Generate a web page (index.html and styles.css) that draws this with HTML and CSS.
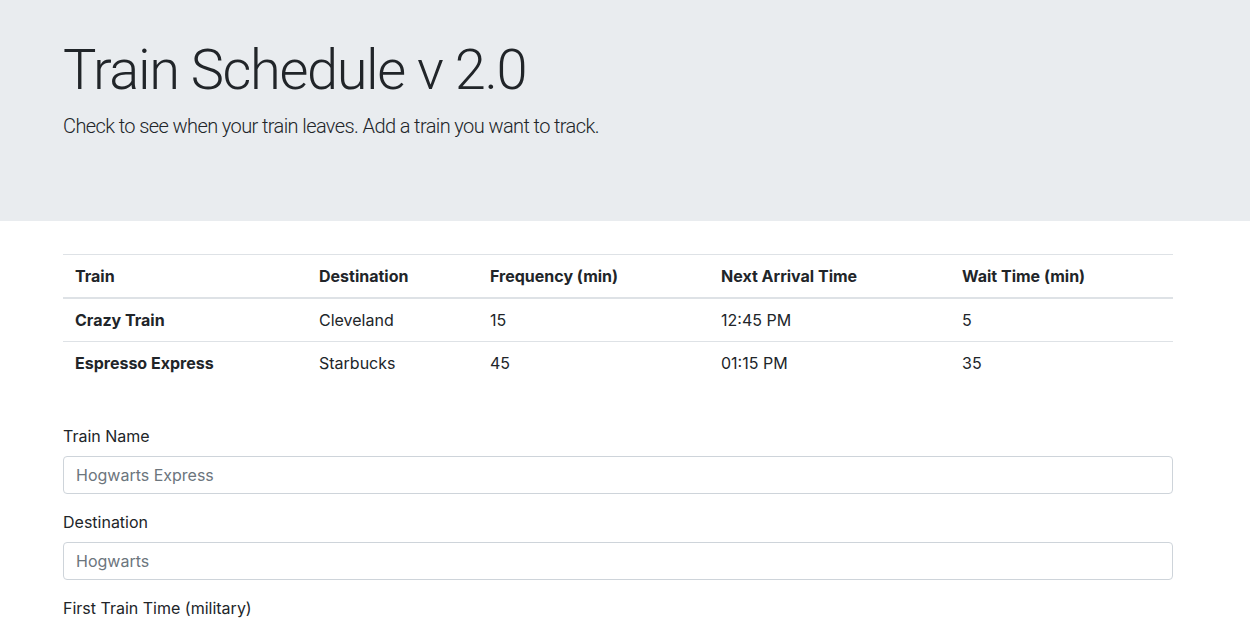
FILE: index.html
```html
<!DOCTYPE html>
<html lang="en">
<head>
<meta charset="utf-8">
<title>Train Schedule</title>
<link rel="stylesheet" href="styles.css">
</head>
<body>
<header class="jumbotron">
  <div class="container">
    <h1 class="display">Train Schedule v 2.0</h1>
    <p class="lead">Check to see when your train leaves. Add a train you want to track.</p>
  </div>
</header>
<main class="container">
  <table class="table">
    <thead>
      <tr>
        <th class="c1">Train</th>
        <th class="c2">Destination</th>
        <th class="c3">Frequency (min)</th>
        <th class="c4">Next Arrival Time</th>
        <th class="c5">Wait Time (min)</th>
      </tr>
    </thead>
    <tbody>
      <tr>
        <th>Crazy Train</th>
        <td>Cleveland</td>
        <td>15</td>
        <td>12:45 PM</td>
        <td>5</td>
      </tr>
      <tr>
        <th>Espresso Express</th>
        <td>Starbucks</td>
        <td>45</td>
        <td>01:15 PM</td>
        <td>35</td>
      </tr>
    </tbody>
  </table>
  <form class="form">
    <div class="form-group">
      <label for="name">Train Name</label>
      <input id="name" class="form-control" type="text" placeholder="Hogwarts Express">
    </div>
    <div class="form-group">
      <label for="dest">Destination</label>
      <input id="dest" class="form-control" type="text" placeholder="Hogwarts">
    </div>
    <div class="form-group">
      <label for="first">First Train Time (military)</label>
      <input id="first" class="form-control" type="text" placeholder="13:00">
    </div>
  </form>
</main>
</body>
</html>
```
FILE: styles.css
```css
* { box-sizing: border-box; }
html, body { margin: 0; padding: 0; }
body {
  font-family: "Inter", "Roboto", "Liberation Sans", sans-serif;
  font-size: 16px;
  line-height: 1.5;
  color: #212529;
  background: #fff;
}
.container {
  width: 1110px;
  margin-left: 63px;
}
.jumbotron {
  background: #e9ecef;
  height: 221px;
  padding-top: 37px;
  margin-bottom: 33px;
}
.display {
  font-family: "Roboto", "Liberation Sans", sans-serif;
  font-size: 56px;
  font-weight: 300;
  line-height: 67px;
  letter-spacing: -1.4px;
  margin: 0 0 7px 0;
}
.lead {
  font-family: "Roboto", "Liberation Sans", sans-serif;
  font-size: 20px;
  font-weight: 300;
  line-height: 30px;
  letter-spacing: -0.6px;
  margin: 0;
}
.table {
  width: 100%;
  border-collapse: collapse;
  margin-bottom: 40px;
}
.table th, .table td {
  text-align: left;
  padding: 12px 12px 11px;
  line-height: 19px;
  border-top: 1px solid #dee2e6;
  vertical-align: top;
}
.table th { font-weight: 700; }
.table thead th { border-bottom: 2px solid #dee2e6; }
.c1 { width: 244px; }
.c2 { width: 171px; }
.c3 { width: 231px; }
.c4 { width: 241px; }
.c5 { width: 223px; }
.form-group { margin-bottom: 16px; }
label {
  display: block;
  margin-bottom: 8px;
  line-height: 24px;
}
.form-control {
  display: block;
  width: 100%;
  height: 38px;
  padding: 6px 12px;
  font: inherit;
  font-size: 16px;
  color: #495057;
  background: #fff;
  border: 1px solid #ced4da;
  border-radius: 4px;
}
.form-control::placeholder { color: #6c757d; opacity: 1; }
```
